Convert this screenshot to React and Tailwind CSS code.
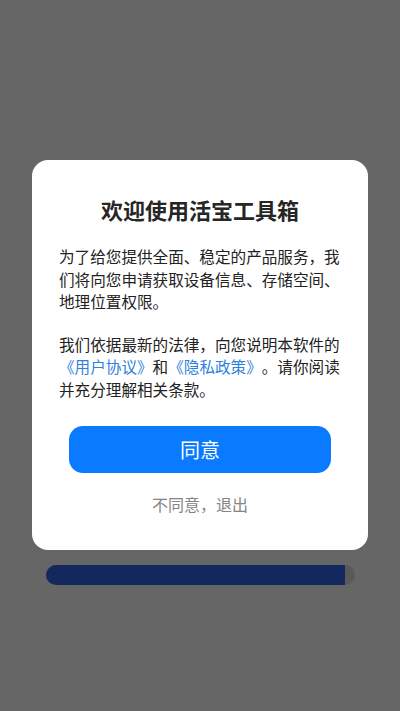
const App = () => {
  const progress = 97;

  return (
    <div
      className="flex flex-col items-center w-full h-[711px] pt-[160px] bg-[#666666] [text-spacing-trim:space-all]"
      style={{ fontFamily: '"Noto Sans CJK SC", "Noto Sans", sans-serif' }}
    >
      <div className="w-[336px] pl-[27px] pr-6 pt-[33px] pb-[35px] bg-white rounded-2xl">
        <h1 className="-ml-[3px] text-[22px] font-bold leading-[32px] text-center text-[#262626]">
          欢迎使用活宝工具箱
        </h1>
        <p className="mt-[20px] text-[15.6px] leading-[22.5px] text-[#222222]">
          为了给您提供全面、稳定的产品服务，我们将向您申请获取设备信息、存储空间、地理位置权限。
        </p>
        <p className="mt-[20px] text-[15.6px] leading-[22.5px] text-[#222222]">
          我们依据最新的法律，向您说明本软件的
          <span className="text-[#2f7fe0]">《用户协议》</span>和
          <span className="text-[#2f7fe0]">《隐私政策》</span>
          。请你阅读并充分理解相关条款。
        </p>
        <div className="-ml-[3px]">
          <button className="block w-[262px] h-[47px] mx-auto mt-[26px] rounded-[14px] bg-[#0a7aff] text-white text-xl">
            同意
          </button>
          <button className="block mx-auto mt-[20px] text-base leading-[22px] text-[#858585]">
            不同意，退出
          </button>
        </div>
      </div>
      <div className="w-[309px] h-5 mt-[15px] rounded-full bg-[#595959] overflow-hidden">
        <div className="h-full bg-[#13285c]" style={{ width: `${progress}%` }} />
      </div>
    </div>
  );
};

export default App;
